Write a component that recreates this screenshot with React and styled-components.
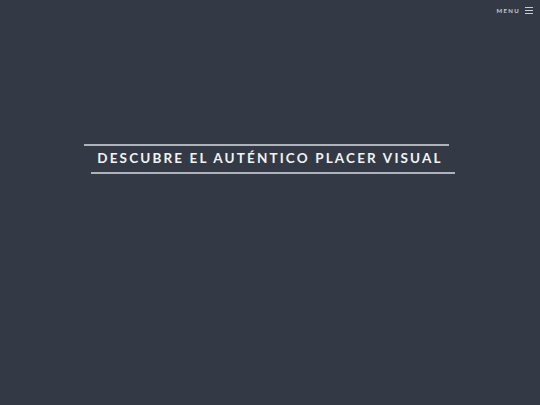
import React from "react";
import styled, { createGlobalStyle } from "styled-components";

const Global = createGlobalStyle`
  html, body { margin: 0; padding: 0; background: #333a45; }
  body { font-family: Lato, "Open Sans", sans-serif; }
`;

const Page = styled.div`
  position: relative;
  width: 540px;
  height: 405px;
  background: #333a45;
  display: flex;
  flex-direction: column;
  align-items: center;
  overflow: hidden;
`;

const Header = styled.header`
  align-self: stretch;
  display: flex;
  justify-content: flex-end;
  align-items: center;
  height: 21px;
  padding-right: 7px;
`;

const MenuButton = styled.button`
  display: flex;
  align-items: center;
  gap: 5px;
  background: none;
  border: 0;
  padding: 0;
  color: #c9ccd2;
  font-family: Lato, sans-serif;
  font-weight: 700;
  font-size: 6px;
  letter-spacing: 1.3px;
  cursor: pointer;
`;

const Burger = styled.span`
  display: flex;
  flex-direction: column;
  gap: 1.5px;
  width: 8px;
  span {
    display: block;
    height: 1.2px;
    background: #c9ccd2;
  }
`;

const Hero = styled.section`
  margin-top: 123px;
  position: relative;
  padding: 5px 0 7px;
  &::before, &::after {
    content: "";
    position: absolute;
    height: 2px;
    background: #aeb2b9;
  }
  &::before { top: 0; left: -13px; right: -6px; }
  &::after { bottom: 0; left: -6px; right: -12px; }
`;

const Title = styled.h1`
  margin: 0;
  color: #f2f3f5;
  font-family: Lato, sans-serif;
  font-weight: 700;
  font-size: 13.5px;
  line-height: 18px;
  letter-spacing: 2.15px;
  white-space: nowrap;
`;

export default function App() {
  return (
    <Page>
      <Global />
      <Header>
        <MenuButton>
          MENU
          <Burger><span /><span /><span /></Burger>
        </MenuButton>
      </Header>
      <Hero>
        <Title>DESCUBRE EL AUTÉNTICO PLACER VISUAL</Title>
      </Hero>
    </Page>
  );
}
